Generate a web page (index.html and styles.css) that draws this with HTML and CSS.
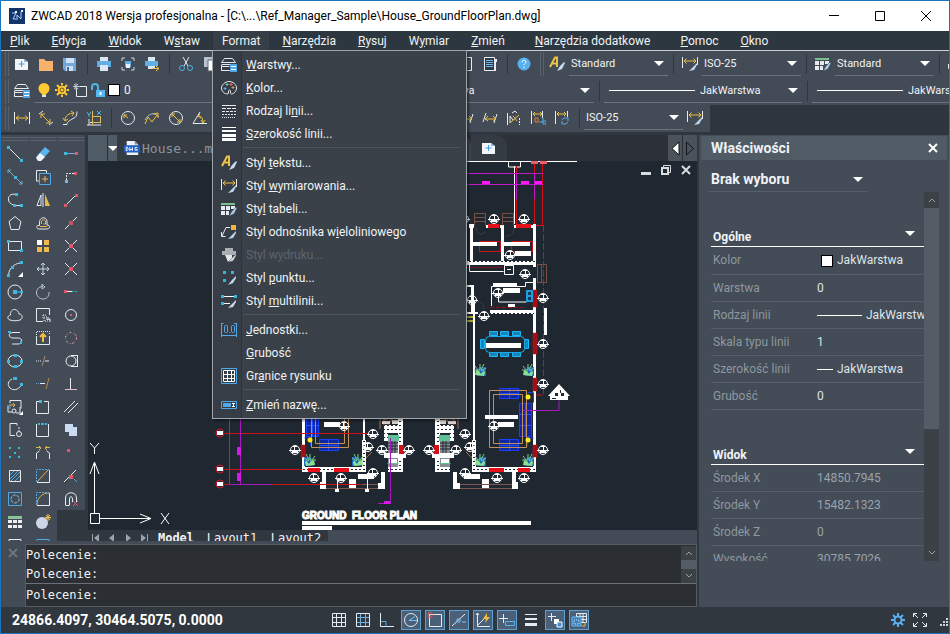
FILE: index.html
```html
<!DOCTYPE html>
<html lang="pl">
<head>
    <meta charset="UTF-8">
    <meta name="viewport" content="width=device-width, initial-scale=1.0">
    <title>ZWCAD 2018 Wersja profesjonalna</title>
    <link rel="stylesheet" href="styles.css">
</head>
<body>
    <!-- icons -->
    <svg class="sprite" aria-hidden="true">
        <symbol id="new" viewBox="0 0 16 16"><path d="M1 3h9l4 3v8H1z" fill="#f2f6fa" stroke="none"/><path d="M10 3v3h4z" fill="#8fb4dc" stroke="none"/><path d="M7.500 5v6M4.500 8h6" stroke="#3f9be0"/></symbol>
        <symbol id="open" viewBox="0 0 16 16"><path d="M1 3h5l2 2h7v10H1z" fill="#f6b26b" stroke="none"/></symbol>
        <symbol id="save" viewBox="0 0 16 16"><path d="M1 2h13v13H3l-2-2z" fill="#6fa8dc" stroke="none"/><path d="M4 2h8v5H4zM4 10h7v5H4z" fill="#cfe0f2" stroke="none"/><path d="M5 11h2v4H5z" fill="#3b6ea5" stroke="none"/></symbol>
        <symbol id="print" viewBox="0 0 16 16"><path d="M4 1h8v4H4zM4 9h8v6H4z" fill="#dbe7f3" stroke="none"/><path d="M1 5h14v6h-3V9H4v2H1z" fill="#62aee8" stroke="none"/></symbol>
        <symbol id="preview" viewBox="0 0 16 16"><path d="M2 5V2h3M11 2h3v3M2 11v3h3M11 14h3v-3" stroke="#cfd8e0"/><path d="M5 5h6v6H5z" fill="#62aee8" stroke="none"/><path d="M6 8h4v4H6z" fill="#e8f0f8" stroke="none"/></symbol>
        <symbol id="publish" viewBox="0 0 16 16"><path d="M4 1h7v4H4zM4 9h7v4H4z" fill="#dbe7f3" stroke="none"/><path d="M1 5h13v5H1z" fill="#62aee8" stroke="none"/><path d="M8 12.500h6M12 10l3 2.500-3 2.500" stroke="#f0c040"/></symbol>
        <symbol id="cut" viewBox="0 0 16 16"><path d="M5 1l5 9M11 1L6 10"/><circle cx="4" cy="12" r="2.500" stroke="#4fb3e8"/><circle cx="12" cy="12" r="2.500" stroke="#4fb3e8"/></symbol>
        <symbol id="copy" viewBox="0 0 16 16"><path d="M2 1h8v10H2z" fill="#b7c3cf" stroke="none"/><path d="M6 4h8v11H6z" fill="#fff" stroke="#5b6670"/></symbol>
        <symbol id="calc" viewBox="0 0 16 16"><path d="M2.500 1.500h11v13h-11z"/><path d="M5 5h6M5 8h6M5 11h6" stroke="#5fc0a0" stroke-dasharray="2 1"/></symbol>
        <symbol id="sheet" viewBox="0 0 16 16"><path d="M2.500 1.500h10v13h-10z" fill="#2f3a44" stroke="#e8eef4"/><path d="M4 4.500h7M4 6.500h7M4 8.500h7M4 10.500h7" stroke="#6fb8f0"/><path d="M12 3h3v3h-1v9h-2z" fill="#e8eef4" stroke="none"/></symbol>
        <symbol id="help" viewBox="0 0 16 16"><circle cx="8" cy="8" r="6.500" fill="#55b0f2" stroke="none"/><path d="M6 6.500c0-3 4-3 4-.5 0 1.500-2 1.500-2 3M8 10.500v1.500" stroke="#fff"/></symbol>
        <symbol id="textstyle" viewBox="0 0 16 16"><path d="M1 11L6 1.500h2V11M3 7.500h5" stroke="#e9c34a" stroke-width="2"/><path d="M15 6l-4 4-3 5 5-2 3-6z" fill="#c6daee" stroke="none"/></symbol>
        <symbol id="dimstyle" viewBox="0 0 16 16"><path d="M.5 1v11M15.500 1v8"/><path d="M2 5h12M4.500 2.500L2 5l2.500 2.500M11.500 2.500L14 5l-2.500 2.500" stroke="#f0c040"/><path d="M15 7l-4 4-4 4 5-1 3-5z" fill="#b9d4ee" stroke="none"/></symbol>
        <symbol id="tabstyle" viewBox="0 0 16 16"><path d="M0 2h14v2H0z" fill="#7cc08c" stroke="none"/><path d="M0 5h4v4H0zM5 5h4v4H5zM10 5h4v3h-4zM0 10h4v4H0zM5 10h3v4H5z" fill="#e6eaee" stroke="none"/><path d="M15 6l-4 4-3 5 5-2 3-6z" fill="#a9cbe6" stroke="#2f3a44" stroke-width=".5"/></symbol>
        <symbol id="layers" viewBox="0 0 16 16"><path d="M3.500 1.500h8l3 4h-14zM.5 7.500v2h8M.5 9.500v4h8M.5 13.500h8M1 7.500h8"/><path d="M9 7h7v8H9z" fill="#4fa8ec" stroke="none"/><path d="M10 9.500h5M10 12.500h5" stroke="#fff"/></symbol>
        <symbol id="bulb" viewBox="0 0 16 16"><circle cx="8" cy="6.500" r="5.500" fill="#ffc933" stroke="none"/><path d="M5 9h6l-1 4H6z" fill="#ffc933" stroke="none"/><path d="M6 14h4" stroke="#dbe4ec" stroke-width="2"/></symbol>
        <symbol id="sun" viewBox="0 0 16 16"><circle cx="8" cy="8" r="4" fill="#ffc933" stroke="#ffc933"/><path d="M8 1v2M8 13v2M1 8h2M13 8h2M3 3l2 2M11 11l2 2M13 3l-2 2M3 13l2-2" stroke="#ffc933" stroke-width="2"/><circle cx="8" cy="8" r="2" stroke="#6b5520"/></symbol>
        <symbol id="freeze" viewBox="0 0 16 16"><path d="M5 4.500h9.500v10h-10V6"/><path d="M4 1v7M1 4.500h7M2 2l4 5M6 2L2 7" stroke="#b9c4cf"/></symbol>
        <symbol id="lock" viewBox="0 0 16 16"><path d="M2 8V5a3 3 0 0 1 6 0v3" stroke="#4fb3e8" stroke-width="2"/><path d="M6 8h9v7H6z" fill="#55b8f0" stroke="none"/><path d="M10.500 10v3" stroke="#fff" stroke-width="2"/></symbol>
        <symbol id="dimlin" viewBox="0 0 16 16"><path d="M.5 2v12M15.500 2v12"/><path d="M2 8h12M5 5.500L2 8l3 2.500M11 5.500L14 8l-3 2.500" stroke="#f0c040"/></symbol>
        <symbol id="dimali" viewBox="0 0 16 16"><path d="M1 4l4-3M11 15l4-3"/><path d="M3 4l9 9M3 8V4h4M12 9v4H8" stroke="#f0c040"/></symbol>
        <symbol id="dimarc" viewBox="0 0 16 16"><path d="M1 14.500h4c0-3 3-4 6-6 3-1 4-3 4-7"/><path d="M3 10c0-4 4-7 9-7M1 8l2 3 3-2M9 1l3 2-2 3" stroke="#f0c040"/></symbol>
        <symbol id="dimord" viewBox="0 0 16 16"><path d="M3 9v6M1 15h14M4 12.500h11"/><path d="M6.500 6.500h8v6h-8zM6.500 1v14" stroke="#e0bd55"/><path d="M1 2l2 3 2-3M3 5v2M11 1l4 4M15 1l-4 4" stroke="#4fb3e8"/></symbol>
        <symbol id="dimrad" viewBox="0 0 16 16"><circle cx="8" cy="8" r="6.500"/><path d="M8 8L4 5M4 8V5h3" stroke="#f0c040"/></symbol>
        <symbol id="dimjog" viewBox="0 0 16 16"><path d="M1 10c3-6 9-9 14-3" stroke="#aeb6be"/><path d="M1 14l3-7 4 5 5-7M9 4l5-1v5" stroke="#f0c040"/></symbol>
        <symbol id="dimdia" viewBox="0 0 16 16"><circle cx="8" cy="8" r="6.500"/><path d="M4 4l8 8M4 7V4h3M12 9v3H9" stroke="#f0c040"/></symbol>
        <symbol id="dimang" viewBox="0 0 16 16"><path d="M8 2L1 13.500h14"/><path d="M6 6c4 0 5 3 5 7M9 10l2 3 2-3M8 4L6 6l3 2" stroke="#f0c040"/></symbol>
        <symbol id="dimobl" viewBox="0 0 16 16"><path d="M4 3L1 12M15 4l-3 9"/><path d="M3 9h11M6 6L3 9l3 2M11 6l3 3-3 2" stroke="#f0c040"/></symbol>
        <symbol id="dimtext" viewBox="0 0 16 16"><path d="M1.500 3v12M4 13V6l3 4M6 3l3-2 2 2"/><path d="M4 13L13 5M7 6l4 5" stroke="#f0c040"/><path d="M13.500 8v7" stroke-dasharray="2 1"/></symbol>
        <symbol id="dimover" viewBox="0 0 16 16"><path d="M1.500 1v13M12.500 1v7"/><path d="M3 4h9M3 4l2-2M3 4l2 2M12 4l-2-2M12 4l-2 2" stroke="#f0c040"/><path d="M5 8h3v4H5z" stroke="#e08030"/><path d="M9 12h4M13 8v6h3v-3h-3" stroke="#4fb3e8"/></symbol>
        <symbol id="dimupd" viewBox="0 0 16 16"><path d="M1.500 1v13M13.500 1v6"/><path d="M3 4h9M5 2L3 4l2 2M10 2l2 2-2 2" stroke="#f0c040"/><path d="M8 10l2-2h4M14 8v3M14 12l-2 2H8M8 14v-3" stroke="#5aa9e6"/></symbol>

        <symbol id="palette" viewBox="0 0 16 16"><path d="M7 14C3 14 .5 11 .5 8S4 1.500 8 1.500s7.500 3 7.500 6.500-3 6-5 6 0-4-2-4-.5 4-1.500 4z"/><path d="M6 3v3M4.500 4.500h3" stroke="#6fd08c"/><path d="M10 3v3M8.500 4.500h3" stroke="#e86a6a"/><path d="M4 7v3M2.500 8.500h3" stroke="#5ab0f0"/><path d="M12 6v3M10.500 7.500h3" stroke="#c9a050"/></symbol>
        <symbol id="ltype" viewBox="0 0 16 16"><path d="M1 2.500h14"/><path d="M1 5.500h14" stroke-dasharray="4 1"/><path d="M1 8.500h14" stroke-dasharray="3 1"/><path d="M1 11.500h14" stroke-dasharray="2 1"/><path d="M1 14.500h14" stroke-dasharray="1 1"/></symbol>
        <symbol id="lweight" viewBox="0 0 16 16"><path d="M1 1h14v1H1zM1 4h14v2H1zM1 8h14v3H1zM1 12h14v3H1z" fill="#fff" stroke="none"/></symbol>
        <symbol id="mleader" viewBox="0 0 16 16"><path d="M10 1h5v5h-5z" fill="#f0b83c" stroke="none"/><path d="M9 3.500H5L1 12M.5 8v4.500h4"/><path d="M15 7l-4 4-4 4 5-1 3-5z" fill="#b9d4ee" stroke="none"/></symbol>
        <symbol id="plotstyle" viewBox="0 0 16 16"><path d="M4 1h8v3H4zM1 4h14v4H1z" fill="#a9aeb3" stroke="none"/><path d="M4 8h7v5l-4 2z" fill="#e4e6e8" stroke="none"/><path d="M15 7l-4 4-4 4 5-1 3-5z" fill="#d8dce0" stroke="#50575f" stroke-width=".5"/></symbol>
        <symbol id="ptstyle" viewBox="0 0 16 16"><path d="M2 1h3v3H2zM10 1h3v3h-3zM2 9h3v3H2z" fill="#36b5d8" stroke="none"/><path d="M15 6l-4 4-4 5 5-2 3-5z" fill="#c6daee" stroke="none"/></symbol>
        <symbol id="mlstyle" viewBox="0 0 16 16"><path d="M2 3.500h12M2 10.500h7" stroke="#fff"/><path d="M0 2h3v3H0zM13 2h3v3h-3zM0 9h3v3H0z" fill="#36b5d8" stroke="none"/><path d="M15 7l-4 4-4 4 5-1 3-5z" fill="#c6daee" stroke="none"/></symbol>
        <symbol id="units" viewBox="0 0 16 16"><path d="M.5 1v14M15.500 1v14M.5 13.500h15M.5 1.500h2M13 1.500h2" stroke="#5aa9e6"/><rect x="3.500" y="3.500" width="3" height="7" rx="1" stroke="#5aa9e6"/><rect x="10.500" y="3.500" width="3" height="7" rx="1" stroke="#5aa9e6"/><path d="M8 10h1v1H8z" fill="#5aa9e6" stroke="none"/></symbol>
        <symbol id="limits" viewBox="0 0 16 16"><path d="M.5 .5h15v15H.5z" stroke="#4fa8e8"/><path d="M2.500 2.500h11v11h-11zM6.500 2v12M10.500 2v12M2 6.500h12M2 10.500h12" stroke="#fff"/></symbol>
        <symbol id="rename" viewBox="0 0 16 16"><path d="M.5 4.500h15v7H.5z" stroke="#4fa8e8"/><path d="M2 6h8v4H2z" fill="#4fa8e8" stroke="none"/><path d="M11 6.500h3M11 9.500h3M12.500 6v4" stroke="#fff"/></symbol>

        <symbol id="line" viewBox="0 0 16 16"><path d="M2 2l12 12"/><path d="M0 0h3v3H0zM13 13h3v3h-3z" fill="#3fb6dc" stroke="none"/></symbol>
        <symbol id="xline" viewBox="0 0 16 16"><path d="M1 1l14 14M1 4V1h3M15 12v3h-3" stroke="#6fb0c8"/><path d="M7 7h3v3H7z" fill="#3fb6dc" stroke="none"/></symbol>
        <symbol id="pline" viewBox="0 0 16 16"><path d="M9 2.500C3 1 1 5 1.500 8S5 14 13 13.500"/><path d="M8 1h3v3H8zM6 12h3v3H6zM13 12h3v3h-3z" fill="#3fb6dc" stroke="none"/></symbol>
        <symbol id="polygon" viewBox="0 0 16 16"><path d="M8 1.500l6 5-2 8H4l-2-8z"/></symbol>
        <symbol id="rect" viewBox="0 0 16 16"><path d="M1.500 3.500h13v9h-13z"/><path d="M0 2h3v3H0zM13 11h3v3h-3z" fill="#3fb6dc" stroke="none"/></symbol>
        <symbol id="arc" viewBox="0 0 16 16"><path d="M1.500 14C2 8 6 3 13 2"/><path d="M0 13h3v3H0zM4 5h3v3H4zM13 0h3v3h-3z" fill="#3fb6dc" stroke="none"/><path d="M16 11v5h-5z" fill="#fff" stroke="none"/></symbol>
        <symbol id="circle" viewBox="0 0 16 16"><circle cx="8" cy="8" r="7"/><path d="M8 8h7" stroke="#3fb6dc"/><path d="M6 6h4v4H6zM13 7h3v2h-3z" fill="#3fb6dc" stroke="none"/></symbol>
        <symbol id="cloud" viewBox="0 0 16 16"><path d="M3 13c-3-1-3-4 .5-5C3 4 6 2 8 2.500S12 5 12 7c4 0 4 5 1 6-3 1-7 1-10 0z"/></symbol>
        <symbol id="spline" viewBox="0 0 16 16"><path d="M13 2.500H6C1 2.500 1 8 6 8h5c5 0 5 6 0 6H5"/><path d="M1 1h3v2H1zM13 11h2v3h-2z" fill="#3fb6dc" stroke="none"/></symbol>
        <symbol id="ellipse" viewBox="0 0 16 16"><ellipse cx="8" cy="8" rx="7" ry="6"/><path d="M0 7h3v3H0zM7 1h3v3H7zM13 7h3v3h-3zM7 12h3v3H7z" fill="#3fb6dc" stroke="none"/></symbol>
        <symbol id="elarc" viewBox="0 0 16 16"><path d="M5 3C1 5 0 9 3 12s9 2 11-3"/><path d="M6 1h4v3H6zM13 7h3v3h-3z" fill="#3fb6dc" stroke="none"/></symbol>
        <symbol id="insert" viewBox="0 0 16 16"><path d="M3 4V1.500h11v8M1 7v6h4M13 8v6h-4"/><circle cx="7" cy="12" r="2"/><path d="M2 6h6M6 4l2 2-2 2" stroke="#e0b84a"/><path d="M16 12v4h-4z" fill="#fff" stroke="none"/><path d="M0 7h3v3" stroke="#4fa8e8"/></symbol>
        <symbol id="block" viewBox="0 0 16 16"><path d="M10 3.500V1.500H3v12h5"/><path d="M12 5v4" stroke-dasharray="2 1"/><circle cx="12" cy="12" r="2.500"/></symbol>
        <symbol id="points" viewBox="0 0 16 16"><path d="M2 2h2v2H2zM11 2h2v2h-2zM7 7h2v2H7zM2 11h2v2H2zM11 11h2v2h-2z" fill="#3fb6dc" stroke="none"/></symbol>
        <symbol id="hatch" viewBox="0 0 16 16"><path d="M2.500 2.500h11v11h-11z"/><path d="M3 7l4-4M3 11l8-8M4 13l9-9M8 13l5-5" stroke="#4fa8e8"/></symbol>
        <symbol id="region" viewBox="0 0 16 16"><path d="M1.500 1.500h13v13h-13z" stroke="#4fa8e8"/><circle cx="8" cy="8" r="4" stroke-dasharray="3 1" stroke="#8fc4e8"/></symbol>
        <symbol id="table" viewBox="0 0 16 16"><path d="M1 2h14v3H1z" fill="#8cc49a" stroke="none"/><path d="M1 6h4v3H1zM6 6h4v3H6zM11 6h4v3h-4zM1 11h4v3H1zM6 11h4v3H6zM11 11h4v3h-4z" fill="#eef1f4" stroke="none"/></symbol>
        <symbol id="mtext" viewBox="0 0 16 16"><path d="M2 2.500h12v12H2zM5 6h6"/></symbol>
        <symbol id="erase" viewBox="0 0 16 16"><path d="M10 1l5 4-9 10-5-4z" fill="#5ab4f0" stroke="none"/><path d="M5 7l5 4-4 4H3l-2-3z" fill="#f0f4f8" stroke="none"/></symbol>
        <symbol id="copyobj" viewBox="0 0 16 16"><path d="M4 12H1.500V1.500h10V4"/><path d="M4.500 4.500h11v11h-11z" stroke="#4fa8e8"/><path d="M10 7v6M7 10h6" stroke="#f0b060"/></symbol>
        <symbol id="mirror" viewBox="0 0 16 16"><path d="M6 3v10.500H2z"/><path d="M8 1v14"/><path d="M10 2v12h5z" fill="#e8b84a" stroke="none"/></symbol>
        <symbol id="offset" viewBox="0 0 16 16"><path d="M2.500 10.500h2V8C4 1 13 1 12 8v2c4 0 3 4 0 4H4c-2 0-3-2-1.500-3.500z"/><path d="M5 11.500h7M6.500 9V7c0-3 4-3 4 0v2h-2" stroke="#e8b84a"/></symbol>
        <symbol id="array" viewBox="0 0 16 16"><path d="M2 2h5v5H2z" fill="#fff" stroke="none"/><path d="M9 2h5v5H9zM2 9h5v5H2zM9 9h5v5H9z" fill="#f0b84a" stroke="none"/></symbol>
        <symbol id="move" viewBox="0 0 16 16"><path d="M8 2v12M2 8h12M6 4l2-2 2 2M6 12l2 2 2-2M4 6L2 8l2 2M12 6l2 2-2 2" stroke="#c4d4e6"/></symbol>
        <symbol id="rotate" viewBox="0 0 16 16"><path d="M8 2.500C3 2.500 1.500 6 1.500 9S5 15 8 15s6.500-2 6-7M7 0v5l3-2z" stroke="#b9c6d3"/></symbol>
        <symbol id="scale" viewBox="0 0 16 16"><path d="M14.500 8V1.500h-13v13H8"/><path d="M8 8h3M8 8v3M9 14v-4h4v4z" stroke-dasharray="1 1"/><path d="M11 12h4v3" stroke="#f0f4f8"/></symbol>
        <symbol id="stretch" viewBox="0 0 16 16"><path d="M1.500 6v8.500h13V6"/><path d="M1.500 5V1.500h13V5" stroke-dasharray="1 1"/><path d="M8 12V5M5 7l3-3 3 3" stroke="#f0c040" stroke-width="2"/></symbol>
        <symbol id="trim" viewBox="0 0 16 16"><path d="M1 8h5" stroke-dasharray="1 1"/><path d="M10 8h4"/><path d="M10 3L7 13" stroke="#a89068"/></symbol>
        <symbol id="extend" viewBox="0 0 16 16"><path d="M1 7.500h4" stroke-dasharray="1 1" stroke="#4fa8e8"/><path d="M5 7.500h5"/><path d="M14 2l-3 11" stroke="#b08a50"/></symbol>
        <symbol id="breakpt" viewBox="0 0 16 16"><path d="M4 2.500H1.500v12h12v-12H9"/><path d="M4 1h3v3H4z" fill="#3fb6dc" stroke="none"/></symbol>
        <symbol id="break" viewBox="0 0 16 16"><path d="M1.500 2v12.500h12V2"/><path d="M3 1h2v2H3zM6 1h3v2H6zM10 1h2v2h-2z" fill="#3fb6dc" stroke="none"/></symbol>
        <symbol id="join" viewBox="0 0 16 16"><path d="M1.500 14V8l3-2M14.500 14V8l-3-2"/><path d="M1 2.500h5M15 2.500h-5M4 1l2 2-2 2M12 1l-2 2 2 2" stroke="#e0b84a"/></symbol>
        <symbol id="chamfer" viewBox="0 0 16 16"><path d="M2 14.500h12.500V2"/><path d="M1.500 14V1.500H14" stroke="#4fa8e8" stroke-dasharray="2 1"/><path d="M2 14L13 2" stroke="#e0b84a"/></symbol>
        <symbol id="fillet" viewBox="0 0 16 16"><path d="M2 14.500h12.500V2"/><path d="M1.500 14V1.500H14" stroke="#4fa8e8" stroke-dasharray="2 1"/><path d="M2 14C2 7 7 2 14 2" stroke="#c9b060"/></symbol>
        <symbol id="explode" viewBox="0 0 16 16"><circle cx="7" cy="9" r="6" fill="#ccd8ea" stroke="none"/><path d="M13 0v7M10 3.500h6M11 1l4 5M15 1l-4 5" stroke="#f0c050"/></symbol>
        <symbol id="copytab" viewBox="0 0 16 16"><path d="M2 2.500h12v12H2zM5 5h5v5H5z" stroke="#4fa8e8"/></symbol>
        <symbol id="snapend" viewBox="0 0 16 16"><path d="M2 7.500h12" stroke="#7fa8e0"/><path d="M1 6h3v3H1z" fill="#3fb6dc" stroke="none"/><path d="M12 6h3v3h-3z" fill="#e0566a" stroke="none"/></symbol>
        <symbol id="snapfrom" viewBox="0 0 16 16"><path d="M3.500 11V4.500h8" stroke-dasharray="2 1"/><path d="M11 3h3v3h-3z" fill="#e0566a" stroke="none"/><path d="M2 11h3v3H2z" fill="#7ab4e8" stroke="none"/></symbol>
        <symbol id="snapseg" viewBox="0 0 16 16"><path d="M3 13L13 3"/><path d="M1 12h3v3H1zM12 2h3v3h-3z" fill="#e0566a" stroke="none"/></symbol>
        <symbol id="snapmid" viewBox="0 0 16 16"><path d="M2 14L14 2"/><path d="M6 6h4v4H6z" fill="#c8505f" stroke="none"/></symbol>
        <symbol id="snapint" viewBox="0 0 16 16"><path d="M2 2l12 12M14 2L2 14"/><path d="M6 6h4v4H6z" fill="#e0566a" stroke="none"/></symbol>
        <symbol id="snapext" viewBox="0 0 16 16"><path d="M3 7.500h6"/><path d="M9 7.500h6" stroke="#2fb5a8" stroke-dasharray="2 1"/><path d="M1 6h3v3H1z" fill="#e0566a" stroke="none"/></symbol>
        <symbol id="snapcen" viewBox="0 0 16 16"><circle cx="8" cy="8" r="5.500"/><path d="M7 7h2v2H7z" fill="#e0566a" stroke="none"/></symbol>
        <symbol id="snapquad" viewBox="0 0 16 16"><circle cx="8" cy="8" r="5.500" stroke="#c85a6a" stroke-dasharray="2 2"/><circle cx="8" cy="8" r="5.500" stroke-dasharray="1 5"/></symbol>
        <symbol id="snaptan" viewBox="0 0 16 16"><circle cx="8" cy="8" r="5"/><path d="M14.500 2v12M8 2.500h6M8 13.500h6"/></symbol>
        <symbol id="snapperp" viewBox="0 0 16 16"><path d="M7.500 2v11"/><path d="M2 13.500h12" stroke="#e8c0c8"/></symbol>
        <symbol id="snappar" viewBox="0 0 16 16"><path d="M1 13L12 2M5 14L15 4"/></symbol>
        <symbol id="snapins" viewBox="0 0 16 16"><path d="M2 2h8v3h4v9H6v-4H2z" fill="#c9dcf2" stroke="none"/></symbol>
        <symbol id="snapnode" viewBox="0 0 16 16"><path d="M4 4h3v3H4z" fill="#e0566a" stroke="none"/></symbol>
        <symbol id="snapnear" viewBox="0 0 16 16"><path d="M1 14L13 2"/><path d="M6 7h4v4H6z" fill="#e0566a" stroke="none"/><path d="M11 11l3 3" stroke="#4fa8e8"/></symbol>
        <symbol id="magnet" viewBox="0 0 16 16"><path d="M2.500 14V7c0-7 11-7 11 0v4M6.500 14V8c0-3 3-3 3 0v3M2.500 14.500h4"/><path d="M10 10l5 5M15 10l-5 5" stroke="#e0566a"/></symbol>

        <symbol id="grid" viewBox="0 0 16 16"><path d="M1.500 1.500h13v13h-13zM5.500 1v14M10.500 1v14M1 5.500h14M1 10.500h14"/></symbol>
        <symbol id="snap" viewBox="0 0 16 16"><path d="M1.500 1.500h13v13h-13z"/><path d="M5.500 2v12M10.500 2v12M2 5.500h12M2 10.500h12" stroke="#6fb0e0"/></symbol>
        <symbol id="ortho" viewBox="0 0 16 16"><path d="M1.500 1v13.500H15"/><path d="M2 9.500h5v5" stroke="#5aa9e6"/></symbol>
        <symbol id="polar" viewBox="0 0 16 16"><circle cx="8" cy="8" r="6.500"/><path d="M14 8.500H6l6-4" stroke="#6fc0f0"/></symbol>
        <symbol id="osnap" viewBox="0 0 16 16"><path d="M2.500 2.500h12v12h-12z"/><path d="M1 1h4v4H1z" stroke="#e05555"/></symbol>
        <symbol id="otrack" viewBox="0 0 16 16"><path d="M1 14L14 2"/><path d="M6 7h3v3H6zM11 10h4" stroke="#6fc0f0"/></symbol>
        <symbol id="ducs" viewBox="0 0 16 16"><path d="M2.500 1v13.500H15M2 14L9 7M1 3l1.500-2L4 3"/><path d="M12 1L8 7h3l-1 4 5-6h-3z" fill="#f0c040" stroke="none"/></symbol>
        <symbol id="dyn" viewBox="0 0 16 16"><path d="M4.500 2v9M0 6.500h9"/><path d="M6.500 9.500h9v4h-9z" stroke="#5ab4f0"/></symbol>
        <symbol id="lwt" viewBox="0 0 16 16"><path d="M2 2.500h12"/><path d="M2 7h12" stroke-width="2"/><path d="M2 12.500h12" stroke-width="3"/></symbol>
        <symbol id="cycle" viewBox="0 0 16 16"><path d="M4.500 1v8M1 4.500h8"/><path d="M7 7h5v5H7z" fill="#fff" stroke="none"/><path d="M10 10h5v5h-5z" fill="#3f8fd0" stroke="#fff"/></symbol>
        <symbol id="model" viewBox="0 0 16 16"><path d="M5.500 1.500h10v9h-10zM9 1v9M12 1v9M5 4.500h11M5 7.500h11"/><path d="M1 5h9v9H1z" fill="#3f7fb8" stroke="#6fb8f0"/><path d="M3 8h5v4H3z" stroke="#cfe4f6" stroke-dasharray="1 1"/><path d="M14 10v4h-3" stroke="#f0b040"/></symbol>
        <symbol id="gear" viewBox="0 0 16 16"><path d="M8 1v14M1 8h14M3 3l10 10M13 3L3 13" stroke="#5ab0f0" stroke-width="2"/><circle cx="8" cy="8" r="4.500" fill="#5ab0f0" stroke="none"/><circle cx="8" cy="8" r="2.500" fill="#31373f" stroke="none"/></symbol>
        <symbol id="full" viewBox="0 0 16 16"><path d="M1.500 5V1.500H5M11 1.500h3.500V5M1.500 11v3.500H5M11 14.500h3.500V11M2 2l4 4M14 2l-4 4M2 14l4-4M14 14l-4-4"/></symbol>
        <symbol id="grip" viewBox="0 0 8 8"><path d="M6 0h2v2H6zM3 3h2v2H3zM6 3h2v2H6zM0 6h2v2H0zM3 6h2v2H3zM6 6h2v2H6z" fill="#cfd3d7" stroke="none"/></symbol>
    </svg>

    <div class="window">
        <header class="titlebar">
            <svg class="logo" viewBox="0 0 16 16"><path d="M0 0h16v16H0z" fill="#14336b"/><path d="M3 5h4l-3 6h3M8 12V7l4 4V4" fill="none" stroke="#a9d4f6"/><path d="M6 3h2v2H6zM12 2h2v2h-2z" fill="#e4f2fc"/></svg>
            <h1>ZWCAD 2018 Wersja profesjonalna - [C:\...\Ref_Manager_Sample\House_GroundFloorPlan.dwg]</h1>
            <div class="win-btns">
                <button aria-label="Minimalizuj"><svg viewBox="0 0 12 12"><path d="M1 5.500h10"/></svg></button>
                <button aria-label="Maksymalizuj"><svg viewBox="0 0 12 12"><path d="M1.500 1.500h9v9h-9z"/></svg></button>
                <button aria-label="Zamknij"><svg viewBox="0 0 12 12"><path d="M1 1l10 10M11 1L1 11"/></svg></button>
            </div>
        </header>

        <nav class="menubar">
            <button><u>P</u>lik</button>
            <button><u>E</u>dycja</button>
            <button><u>W</u>idok</button>
            <button>W<u>s</u>taw</button>
            <div class="menu-wrap">
                <button class="on">Format</button>
                <div class="dropdown">
                    <button><svg class="ico"><use href="#layers"/></svg><span><u>W</u>arstwy...</span></button>
                    <button><svg class="ico"><use href="#palette"/></svg><span><u>K</u>olor...</span></button>
                    <button><svg class="ico"><use href="#ltype"/></svg><span>Rodzaj li<u>n</u>ii...</span></button>
                    <button><svg class="ico"><use href="#lweight"/></svg><span><u>S</u>zerokość linii...</span></button>
                    <hr>
                    <button><svg class="ico"><use href="#textstyle"/></svg><span>Styl <u>t</u>ekstu...</span></button>
                    <button><svg class="ico"><use href="#dimstyle"/></svg><span>Styl <u>w</u>ymiarowania...</span></button>
                    <button><svg class="ico"><use href="#tabstyle"/></svg><span>Sty<u>l</u> tabeli...</span></button>
                    <button><svg class="ico"><use href="#mleader"/></svg><span>Styl odnośnika w<u>i</u>eloliniowego</span></button>
                    <button disabled><svg class="ico"><use href="#plotstyle"/></svg><span>Styl w<u>y</u>druku...</span></button>
                    <button><svg class="ico"><use href="#ptstyle"/></svg><span>Styl <u>p</u>unktu...</span></button>
                    <button><svg class="ico"><use href="#mlstyle"/></svg><span>Styl <u>m</u>ultilinii...</span></button>
                    <hr>
                    <button><svg class="ico"><use href="#units"/></svg><span><u>J</u>ednostki...</span></button>
                    <button><svg class="ico"></svg><span><u>G</u>rubość</span></button>
                    <button><svg class="ico"><use href="#limits"/></svg><span>Gr<u>a</u>nice rysunku</span></button>
                    <hr>
                    <button><svg class="ico"><use href="#rename"/></svg><span><u>Z</u>mień nazwę...</span></button>
                </div>
            </div>
            <button><u>N</u>arzędzia</button>
            <button><u>R</u>ysuj</button>
            <button>W<u>y</u>miar</button>
            <button><u>Z</u>mień</button>
            <button class="wide"><u>N</u>arzędzia dodatkowe</button>
            <button><u>P</u>omoc</button>
            <button><u>O</u>kno</button>
        </nav>

        <div class="toolbars">
            <div class="toolbar">
                <div class="tb-left">
                    <i class="handle"></i>
                    <button aria-label="Nowy"><svg class="ico"><use href="#new"/></svg></button>
                    <button aria-label="Otwórz"><svg class="ico"><use href="#open"/></svg></button>
                    <button aria-label="Zapisz"><svg class="ico"><use href="#save"/></svg></button>
                    <i class="sep"></i>
                    <button aria-label="Drukuj"><svg class="ico"><use href="#print"/></svg></button>
                    <button aria-label="Podgląd wydruku"><svg class="ico"><use href="#preview"/></svg></button>
                    <button aria-label="Publikuj"><svg class="ico"><use href="#publish"/></svg></button>
                    <i class="sep"></i>
                    <button aria-label="Wytnij"><svg class="ico"><use href="#cut"/></svg></button>
                    <button aria-label="Kopiuj"><svg class="ico"><use href="#copy"/></svg></button>
                </div>
                <button aria-label="Kalkulator"><svg class="ico"><use href="#calc"/></svg></button>
                <button aria-label="Arkusze"><svg class="ico"><use href="#sheet"/></svg></button>
                <i class="sep"></i>
                <button aria-label="Pomoc"><svg class="ico"><use href="#help"/></svg></button>
                <i class="handle"></i>
                <button aria-label="Styl tekstu"><svg class="ico"><use href="#textstyle"/></svg></button>
                <label class="combo"><select aria-label="Styl tekstu"><option>Standard</option></select></label>
                <i class="sep"></i>
                <button aria-label="Styl wymiarowania"><svg class="ico"><use href="#dimstyle"/></svg></button>
                <label class="combo"><select aria-label="Styl wymiarowania"><option>ISO-25</option></select></label>
                <i class="sep"></i>
                <button aria-label="Styl tabeli"><svg class="ico"><use href="#tabstyle"/></svg></button>
                <label class="combo"><select aria-label="Styl tabeli"><option>Standard</option></select></label>
                <i class="sep"></i>
                <button aria-label="Styl odnośnika"><svg class="ico"><use href="#mleader"/></svg></button>
            </div>
            <div class="toolbar">
                <div class="tb-layers">
                    <i class="handle"></i>
                    <button aria-label="Warstwy"><svg class="ico"><use href="#layers"/></svg></button>
                    <label class="combo layer">
                        <svg class="ico"><use href="#bulb"/></svg>
                        <svg class="ico"><use href="#sun"/></svg>
                        <svg class="ico"><use href="#freeze"/></svg>
                        <svg class="ico"><use href="#lock"/></svg>
                        <i class="swatch"></i>
                        <select aria-label="Warstwa"><option>0</option></select>
                    </label>
                </div>
                <label class="combo color"><i class="swatch"></i><select aria-label="Kolor"><option>JakWarstwa</option></select></label>
                <i class="sep"></i>
                <label class="combo ltype"><i class="stroke"></i><select aria-label="Rodzaj linii"><option>JakWarstwa</option></select></label>
                <i class="sep"></i>
                <label class="combo ltype"><i class="stroke"></i><select aria-label="Szerokość linii"><option>JakWarstwa</option></select></label>
            </div>
            <div class="toolbar short">
                <div class="tb-left">
                    <i class="handle"></i>
                    <button aria-label="Wymiar liniowy"><svg class="ico"><use href="#dimlin"/></svg></button>
                    <button aria-label="Wymiar wyrównany"><svg class="ico"><use href="#dimali"/></svg></button>
                    <button aria-label="Długość łuku"><svg class="ico"><use href="#dimarc"/></svg></button>
                    <button aria-label="Współrzędne"><svg class="ico"><use href="#dimord"/></svg></button>
                    <i class="sep"></i>
                    <button aria-label="Promień"><svg class="ico"><use href="#dimrad"/></svg></button>
                    <button aria-label="Uskok"><svg class="ico"><use href="#dimjog"/></svg></button>
                    <button aria-label="Średnica"><svg class="ico"><use href="#dimdia"/></svg></button>
                    <button aria-label="Kątowy"><svg class="ico"><use href="#dimang"/></svg></button>
                </div>
                <button aria-label="Odstęp"><svg class="ico"><use href="#dimobl"/></svg></button>
                <button aria-label="Pochyl"><svg class="ico"><use href="#dimobl"/></svg></button>
                <button aria-label="Edycja tekstu"><svg class="ico"><use href="#dimtext"/></svg></button>
                <button aria-label="Zastąp"><svg class="ico"><use href="#dimover"/></svg></button>
                <button aria-label="Aktualizuj"><svg class="ico"><use href="#dimupd"/></svg></button>
                <i class="sep"></i>
                <label class="combo"><select aria-label="Styl wymiaru"><option>ISO-25</option></select></label>
                <button aria-label="Styl wymiarowania"><svg class="ico"><use href="#dimstyle"/></svg></button>
            </div>
        </div>

        <div class="work">
            <div class="left">
                <div class="main">
                    <aside class="tools">
                        <div class="tools-col">
                            <i class="handle-h"></i>
                            <button aria-label="Linia"><svg class="ico"><use href="#line"/></svg></button>
                            <button aria-label="Prosta"><svg class="ico"><use href="#xline"/></svg></button>
                            <button aria-label="Polilinia"><svg class="ico"><use href="#pline"/></svg></button>
                            <button aria-label="Wielobok"><svg class="ico"><use href="#polygon"/></svg></button>
                            <button aria-label="Prostokąt"><svg class="ico"><use href="#rect"/></svg></button>
                            <button aria-label="Łuk"><svg class="ico"><use href="#arc"/></svg></button>
                            <button aria-label="Okrąg"><svg class="ico"><use href="#circle"/></svg></button>
                            <button aria-label="Chmurka"><svg class="ico"><use href="#cloud"/></svg></button>
                            <button aria-label="Splajn"><svg class="ico"><use href="#spline"/></svg></button>
                            <button aria-label="Elipsa"><svg class="ico"><use href="#ellipse"/></svg></button>
                            <button aria-label="Łuk eliptyczny"><svg class="ico"><use href="#elarc"/></svg></button>
                            <button aria-label="Wstaw blok"><svg class="ico"><use href="#insert"/></svg></button>
                            <button aria-label="Utwórz blok"><svg class="ico"><use href="#block"/></svg></button>
                            <button aria-label="Punkt"><svg class="ico"><use href="#points"/></svg></button>
                            <button aria-label="Kreskowanie"><svg class="ico"><use href="#hatch"/></svg></button>
                            <button aria-label="Region"><svg class="ico"><use href="#region"/></svg></button>
                            <button aria-label="Tabela"><svg class="ico"><use href="#table"/></svg></button>
                            <button aria-label="Tekst"><svg class="ico"><use href="#mtext"/></svg></button>
                        </div>
                        <div class="tools-col">
                            <i class="handle-h"></i>
                            <button aria-label="Wymaż"><svg class="ico"><use href="#erase"/></svg></button>
                            <button aria-label="Kopiuj"><svg class="ico"><use href="#copyobj"/></svg></button>
                            <button aria-label="Lustro"><svg class="ico"><use href="#mirror"/></svg></button>
                            <button aria-label="Odsuń"><svg class="ico"><use href="#offset"/></svg></button>
                            <button aria-label="Szyk"><svg class="ico"><use href="#array"/></svg></button>
                            <button aria-label="Przesuń"><svg class="ico"><use href="#move"/></svg></button>
                            <button aria-label="Obróć"><svg class="ico"><use href="#rotate"/></svg></button>
                            <button aria-label="Skala"><svg class="ico"><use href="#scale"/></svg></button>
                            <button aria-label="Rozciągnij"><svg class="ico"><use href="#stretch"/></svg></button>
                            <button aria-label="Utnij"><svg class="ico"><use href="#trim"/></svg></button>
                            <button aria-label="Wydłuż"><svg class="ico"><use href="#extend"/></svg></button>
                            <button aria-label="Przerwij w punkcie"><svg class="ico"><use href="#breakpt"/></svg></button>
                            <button aria-label="Przerwij"><svg class="ico"><use href="#break"/></svg></button>
                            <button aria-label="Połącz"><svg class="ico"><use href="#join"/></svg></button>
                            <button aria-label="Fazuj"><svg class="ico"><use href="#chamfer"/></svg></button>
                            <button aria-label="Zaokrąglij"><svg class="ico"><use href="#fillet"/></svg></button>
                            <button aria-label="Rozbij"><svg class="ico"><use href="#explode"/></svg></button>
                            <button aria-label="Kolejność"><svg class="ico"><use href="#copytab"/></svg></button>
                        </div>
                        <div class="tools-col last">
                            <i class="handle-h"></i>
                            <button aria-label="Punkt śledzenia"><svg class="ico"><use href="#snapend"/></svg></button>
                            <button aria-label="Od"><svg class="ico"><use href="#snapfrom"/></svg></button>
                            <button aria-label="Koniec"><svg class="ico"><use href="#snapseg"/></svg></button>
                            <button aria-label="Symetria"><svg class="ico"><use href="#snapmid"/></svg></button>
                            <button aria-label="Przecięcie"><svg class="ico"><use href="#snapint"/></svg></button>
                            <button aria-label="Przecięcie pozorne"><svg class="ico"><use href="#snapint"/></svg></button>
                            <button aria-label="Przedłużenie"><svg class="ico"><use href="#snapext"/></svg></button>
                            <button aria-label="Centrum"><svg class="ico"><use href="#snapcen"/></svg></button>
                            <button aria-label="Kwadrant"><svg class="ico"><use href="#snapquad"/></svg></button>
                            <button aria-label="Styczny"><svg class="ico"><use href="#snaptan"/></svg></button>
                            <button aria-label="Prostopadły"><svg class="ico"><use href="#snapperp"/></svg></button>
                            <button aria-label="Równoległy"><svg class="ico"><use href="#snappar"/></svg></button>
                            <button aria-label="Wstawienie"><svg class="ico"><use href="#snapins"/></svg></button>
                            <button aria-label="Węzeł"><svg class="ico"><use href="#snapnode"/></svg></button>
                            <button aria-label="Najbliższy"><svg class="ico"><use href="#snapnear"/></svg></button>
                            <button aria-label="Bez lokalizacji"><svg class="ico"><use href="#magnet"/></svg></button>
                        </div>
                    </aside>

                    <section class="docs">
                        <div class="doc-tabs">
                            <i class="tab-block"></i>
                            <button class="tab-list" aria-label="Lista rysunków"><i class="tri"></i></button>
                            <button class="doc-tab">
                                <svg class="dwg" viewBox="0 0 18 16"><path d="M3 0h9l4 4v12H3z" fill="#eef2f6"/><path d="M12 0l4 4h-4z" fill="#8a949e"/><rect y="5" width="18" height="8" rx="1" fill="#1d5fc4"/><path d="M2.500 7v4h1l1-1V8l-1-1zM6.500 7v4l1.500-2 1.500 2V7M15 7.500h-2.500v3H15V9.500h-1" fill="none" stroke="#fff"/></svg>
                                <span>House...mple.dwg</span>
                            </button>
                            <span class="tab-close">x</span>
                            <button class="tab-new" aria-label="Nowy rysunek"><svg class="ico"><use href="#new"/></svg></button>
                            <div class="tab-nav">
                                <button aria-label="Poprzedni"><svg viewBox="0 0 14 26"><path d="M11 7v13L4 13.500z" fill="#fff" stroke="#111"/></svg></button>
                                <button aria-label="Następny"><svg viewBox="0 0 14 26"><path d="M3.500 7v13l7-6.500z" fill="none" stroke="#14181c"/></svg></button>
                            </div>
                        </div>

                        <div class="canvas">
                            <svg class="drawing" width="609" height="370" viewBox="88 161 609 370">
                                <defs>
                                    <!-- section mark -->
                                    <g id="mark"><circle r="4.500" fill="none" stroke="#fff"/><path d="M-6 .5h12" stroke="#fff"/><path d="M-3 1h6v2h-6z" fill="#fff"/><path d="M-2-3.500h4M.5-4v4" stroke="#fff"/></g>
                                    <g id="plant"><path d="M-1-4h7v9h-9z" fill="#1766c8"/><path d="M-5 4l1-5 3 1 2 3 3-4 1 3-1 3z" fill="#8be08b"/><path d="M-5-5l3 4M0-7v6M4-7l-3 6M6-3l-5 3M-6-1h6" stroke="#7ccf86"/></g>
                                    <pattern id="dots" width="4" height="4" patternUnits="userSpaceOnUse"><path d="M0 0h4v4H0z" fill="#fff"/><path d="M1 1h2v1H1z" fill="#1f2830"/></pattern>
                                    <g id="wing">
                                        <!-- walls -->
                                        <path d="M470 226h3v36h-3zM501 226h3v36h-3zM533 224h3v43h-3zM533 278h3v192h-3zM473 300h2v170h-2zM469 224h5v4h-5zM486 225h3v3h-3zM500 225h4v3h-4zM514 225h3v3h-3zM530 225h6v3h-6zM464 285h10v2h-10zM471 285h3v27h-3zM464 312h14v2h-14z" fill="#fff"/>
                                        <path d="M464 261h72v4h-72zM490 310h44v4h-44zM472 467h64v5h-64zM472 440h4v30h-4z" fill="url(#dots)"/>
                                        <path d="M488 224h11v4h-11zM516 224h15v4h-15zM489 468h15v4h-15zM518 468h12v4h-12z" fill="#e81018"/>
                                        <path d="M533 290h4v17h-4zM533 333h4v21h-4zM533 378h4v13h-4zM533 445h4v12h-4z" fill="#9c1018" stroke="#d01018" stroke-width=".5"/>
                                        <!-- bathrooms -->
                                        <path d="M479.500 241.500h21v10h-21zM511.500 241.500h21v10h-21z" fill="none" stroke="#d01018"/>
                                        <path d="M470 267.500h33" stroke="#7c1820"/>
                                        <path d="M471 242h26v4h-26zM504 242h26v4h-26zM515 251h16v5h-16z" fill="#fff"/>
                                        <path d="M469.500 265v6.500h34M504.500 265.500h9v9h-9zM507 269.500h4" fill="none" stroke="#fff"/>
                                        <path d="M474.500 213.500h11v12M474.500 213.500v12M474.500 217.500h11M474.500 221.500h11M502.500 213.500h11v12M502.500 213.500v12M502.500 217.500h11M502.500 221.500h11M537.500 264.500h9v18h-9zM541.500 264v18" fill="none" stroke="#7c5040"/>
                                        <path d="M476 228c1 6 5 8 9 4M505 236c5 1 9-2 9-8M476 301c5 0 8 3 8 8" fill="none" stroke="#4a3a38"/>
                                        <!-- kitchen -->
                                        <path d="M491.500 306v-19.500h34v-4h8M498.500 288v14h28" fill="none" stroke="#fff"/>
                                        <path d="M493 283h24v4h-24zM503 288h17v5h-17zM508 304h7v3h-7zM544 308h3v27h-3z" fill="#fff"/>
                                        <path d="M490 307.500h36" stroke="#a01018" stroke-dasharray="4 2"/>
                                        <path d="M526 290h7v12h-7z" fill="#1e9ee0"/><path d="M528 292h3v3h-3zM528 297h3v3h-3z" fill="#123a5c"/>
                                        <path d="M464 317h9M464 321h9" stroke="#a8a428" stroke-width="2"/>
                                        <!-- dining table -->
                                        <path d="M489.500 331.500h8v4h-8zM500.500 331.500h8v4h-8zM512.500 331.500h8v4h-8zM489.500 352.500h8v4h-8zM500.500 352.500h8v4h-8zM512.500 352.500h8v4h-8zM480.500 339.500h4v9h-4zM524.500 339.500h4v9h-4z" fill="#1684b8" stroke="#18b8fa"/>
                                        <rect x="485.500" y="336.500" width="39" height="16" rx="4" fill="#1f2830" stroke="#18a8ea"/>
                                        <path d="M486 343h35v5h-35z" fill="#fff"/>
                                        <!-- living room -->
                                        <path d="M499.500 388.500h19v10h-19zM519.500 403.500h12v33h-12zM499.500 439.500h19v11h-19z" fill="#1226a0" stroke="#1840ff"/>
                                        <path d="M509.500 388v11M499 393.500h19M525.500 404v32M519 414.500h13M519 425.500h13M509.500 439v12M499 445.500h19" stroke="#2050ff"/>
                                        <path d="M527.500 392.500h6v10M527.500 446v-8h6" fill="none" stroke="#1840d8"/>
                                        <path d="M489.500 390.500h37v57h-37zM493.500 394.500h29v49h-29z" fill="none" stroke="#c09060"/>
                                        <path d="M485 415h33v4h-33zM498 422h16v5h-16z" fill="#fff"/>
                                        <circle cx="528" cy="397" r="2.500" fill="#ffec20"/><circle cx="528" cy="440" r="2.500" fill="#ffec20"/>
                                        <!-- stairs -->
                                        <path d="M435 419h5v53h-5zM440 467h10v5h-10zM440 425h14v8h-14zM450 433h4v8h-4z" fill="url(#dots)"/>
                                        <path d="M439 435h11v6h-11z" fill="#5fbf96"/><path d="M440 441h10v26h-10z" fill="#888f94"/><path d="M440 443h10M440 446h10M440 449h10M443 441v13M446 441v13" stroke="#1f2830"/>
                                        <path d="M432 453h22v5h-22zM441 459h8v5h-8z" fill="#fff"/><path d="M439.500 463.500h11" stroke="#5fbf96"/>
                                        <path d="M434 445h5v9h-5z" fill="#d01018"/>
                                        <path d="M446 419l4 6M450 419h4v6M458 419v10M466 452l6 6" fill="none" stroke="#b07050"/>
                                        <path d="M440 420h6v4h-6zM448 421h8v3h-8z" fill="#d8d0cc"/>
                                        <!-- bay window -->
                                        <path d="M453 472h4v11h3v6h-7zM482 479h7v10h-7zM512 472h4v10h2v7h-6zM464 474h16v5h-16z" fill="#fff"/>
                                        <path d="M460 484.500h52M460 488.500h52" stroke="#7a584c"/>
                                        <use href="#mark" x="464" y="219"/><use href="#mark" x="494" y="219"/><use href="#mark" x="524" y="219"/>
                                        <use href="#mark" x="510" y="255"/><use href="#mark" x="525" y="274"/><use href="#mark" x="498" y="293"/>
                                        <use href="#mark" x="472" y="300"/><use href="#mark" x="484" y="316"/><use href="#mark" x="543" y="298"/>
                                        <use href="#mark" x="543" y="344"/><use href="#mark" x="543" y="384"/><use href="#mark" x="494" y="426"/>
                                        <use href="#mark" x="543" y="450"/><use href="#mark" x="465" y="434"/><use href="#mark" x="470" y="447"/>
                                        <use href="#mark" x="456" y="450"/><use href="#mark" x="429" y="450"/><use href="#mark" x="465" y="473"/>
                                        <use href="#mark" x="497" y="478"/><use href="#mark" x="524" y="478"/>
                                        <use href="#plant" x="480" y="371"/><use href="#plant" x="528" y="371"/>
                                        <use href="#plant" x="480" y="461"/><use href="#plant" x="528" y="461"/>
                                    </g>
                                </defs>
                                <!-- axes above the plan -->
                                <path d="M464 161.500h113M514.500 166v58M508.500 162v5h12v-5" fill="none" stroke="#fff"/>
                                <path d="M516.500 166v58M534.500 163v62M542.500 163v62M535 225.500h8" fill="none" stroke="#d01018"/>
                                <path d="M543.500 225v170h-8" fill="none" stroke="#d01018" stroke-dasharray="7 2"/>
                                <path d="M531 161h7v3h-7zM540 161h7v3h-7z" fill="#e86070"/>
                                <path d="M464 173.500h79M464 184.500h79M516.500 174v25M534.500 174v25" fill="none" stroke="#c018c8"/>
                                <path d="M482 181h8v3h-8zM521 181h8v3h-8zM535 181h7v3h-7z" fill="#ff18ff"/>
                                <use href="#wing"/>
                                <use href="#wing" transform="translate(838 0) scale(-1 1)"/>
                                <!-- axes on the left -->
                                <path d="M225 433.500h143M225 469.500h77M225 484.500h15M272 484.500h90" stroke="#d01018"/>
                                <path d="M229.500 419v65M240.500 419v65M230 484.500h42M390.500 438v66M378 503.500h12M523 410.500h36v-10" fill="none" stroke="#a818c0"/>
                                <path d="M237 447h4v8h-4zM237 473h4v8h-4zM384 501h6v3h-6z" fill="#d818e8"/>
                                <g fill="#1f2830" stroke="#d01828"><circle cx="220" cy="433" r="4"/><circle cx="220" cy="469" r="4"/><circle cx="220" cy="484" r="4"/></g>
                                <path d="M217 431h6v4h-6zM217 467h6v4h-6zM217 482h6v4h-6z" fill="#fff"/>
                                <path d="M337.500 478v13M367.500 478v13" stroke="#fff"/><path d="M335 489h4v3h-4zM365 489h4v3h-4z" fill="#fff"/>
                                <!-- north sign -->
                                <path d="M559 384l11 12h-2v4h-18v-4h-2z" fill="#fff"/><path d="M555 393h3v3h-3zM560 390h1v3h-1zM561 393h3v3h-3zM552 398h4v1h-4z" fill="#1f2830"/>
                                <text class="plan-title" x="302" y="519">GROUND&#160; FLOOR PLAN</text>
                                <path d="M302 521h229v4H302zM302 526h30v4h-30z" fill="#fff"/>
                                <!-- ucs -->
                                <path d="M90.500 513.500h9v10h-9zM94.500 513v-50M90 474l4.500-12 4.500 12M100 518.500h51M140 514l11 4.500-11 4.500M90 443l4.500 5 4.500-5M94.500 448v6M161 513l8 11M169 513l-8 11" fill="none" stroke="#fff"/>
                            </svg>
                            <div class="mdi-btns">
                                <button aria-label="Minimalizuj rysunek"><svg viewBox="0 0 12 12"><path d="M1 8h10v3H1z" fill="#d8dcdf"/></svg></button>
                                <button aria-label="Przywróć rysunek"><svg viewBox="0 0 12 12"><path d="M3.500 3V1.500h7v7H9" fill="none" stroke="#d8dcdf"/><path d="M2 4h6v6H2z" fill="none" stroke="#d8dcdf" stroke-width="2"/></svg></button>
                                <button aria-label="Zamknij rysunek"><svg viewBox="0 0 12 12"><path d="M2 2l8 8M10 2l-8 8" stroke="#d8dcdf" stroke-width="2"/></svg></button>
                            </div>
                        </div>

                        <div class="layout-tabs">
                            <button aria-label="Pierwszy"><svg viewBox="0 0 12 12"><path d="M2.500 2v8" stroke="#9aa3ab"/><path d="M9 2v8L4 6z" fill="#9aa3ab"/></svg></button>
                            <button aria-label="Wstecz"><svg viewBox="0 0 12 12"><path d="M8 2v8L3 6z" fill="#9aa3ab"/></svg></button>
                            <button aria-label="Dalej"><svg viewBox="0 0 12 12"><path d="M4 2v8l5-4z" fill="#9aa3ab"/></svg></button>
                            <button aria-label="Ostatni"><svg viewBox="0 0 12 12"><path d="M9.500 2v8" stroke="#9aa3ab"/><path d="M3 2v8l5-4z" fill="#9aa3ab"/></svg></button>
                            <button class="layout on">Model</button>
                            <button class="layout">Layout1</button>
                            <button class="layout">Layout2</button>
                        </div>
                    </section>
                </div>

                <section class="command">
                    <button class="cmd-close" aria-label="Zamknij"><svg viewBox="0 0 12 12"><path d="M2 2l8 8M10 2l-8 8" stroke="#6d757d" stroke-width="2"/></svg></button>
                    <div class="cmd-body">
                        <div class="cmd-log">
                            <div class="cmd-lines">
                                <p>Polecenie:</p>
                                <p>Polecenie:</p>
                            </div>
                            <div class="scroll">
                                <button aria-label="W górę"><svg viewBox="0 0 12 12"><path d="M3 8l3-3 3 3"/></svg></button>
                                <i class="thumb"></i>
                                <button aria-label="W dół"><svg viewBox="0 0 12 12"><path d="M3 4l3 3 3-3"/></svg></button>
                            </div>
                        </div>
                        <input class="cmd-input" type="text" value="Polecenie:" aria-label="Wiersz poleceń">
                    </div>
                </section>
            </div>

            <aside class="props">
                <div class="props-head">
                    <h2>Właściwości</h2>
                    <button aria-label="Zamknij panel"><svg viewBox="0 0 12 12"><path d="M2 2l8 8M10 2l-8 8" stroke="#fff" stroke-width="2"/></svg></button>
                </div>
                <label class="combo pick"><select aria-label="Wybór"><option>Brak wyboru</option></select></label>
                <div class="props-body">
                    <div class="props-list">
                        <h3>Ogólne<i class="tri"></i></h3>
                        <table>
                            <tr><th>Kolor</th><td><i class="swatch"></i>JakWarstwa</td></tr>
                            <tr><th>Warstwa</th><td>0</td></tr>
                            <tr><th>Rodzaj linii</th><td><i class="stroke"></i>JakWarstwa</td></tr>
                            <tr><th>Skala typu linii</th><td>1</td></tr>
                            <tr><th>Szerokość linii</th><td><i class="stroke small"></i>JakWarstwa</td></tr>
                            <tr><th>Grubość</th><td>0</td></tr>
                        </table>
                        <h3>Widok<i class="tri"></i></h3>
                        <table class="muted">
                            <tr><th>Środek X</th><td>14850.7945</td></tr>
                            <tr><th>Środek Y</th><td>15482.1323</td></tr>
                            <tr><th>Środek Z</th><td>0</td></tr>
                            <tr><th>Wysokość</th><td>30785.7026</td></tr>
                        </table>
                    </div>
                    <div class="scroll tall">
                        <button aria-label="W górę"><svg viewBox="0 0 12 12"><path d="M3 8l3-3 3 3"/></svg></button>
                        <i class="thumb"></i>
                        <button aria-label="W dół"><svg viewBox="0 0 12 12"><path d="M3 4l3 3 3-3"/></svg></button>
                    </div>
                </div>
            </aside>
        </div>

        <footer class="status">
            <div class="coords">24866.4097, 30464.5075, 0.0000</div>
            <div class="modes">
                <button aria-label="Siatka"><svg class="ico"><use href="#grid"/></svg></button>
                <button aria-label="Skok"><svg class="ico"><use href="#snap"/></svg></button>
                <button aria-label="Orto"><svg class="ico"><use href="#ortho"/></svg></button>
                <button class="on" aria-label="Biegun"><svg class="ico"><use href="#polar"/></svg></button>
                <button class="on" aria-label="Obiekt"><svg class="ico"><use href="#osnap"/></svg></button>
                <button class="on" aria-label="Śledzenie"><svg class="ico"><use href="#otrack"/></svg></button>
                <button class="on" aria-label="Dynamiczny LUW"><svg class="ico"><use href="#ducs"/></svg></button>
                <button class="on" aria-label="Dyn"><svg class="ico"><use href="#dyn"/></svg></button>
                <button aria-label="Szerokość"><svg class="ico"><use href="#lwt"/></svg></button>
                <button class="on" aria-label="Wybór cykliczny"><svg class="ico"><use href="#cycle"/></svg></button>
                <button class="on" aria-label="Model"><svg class="ico"><use href="#model"/></svg></button>
            </div>
            <div class="status-right">
                <button aria-label="Ustawienia"><svg class="ico"><use href="#gear"/></svg></button>
                <button aria-label="Pełny ekran"><svg class="ico"><use href="#full"/></svg></button>
                <svg class="resize"><use href="#grip"/></svg>
            </div>
        </footer>
    </div>
</body>
</html>
```
FILE: styles.css
```css
*{
    padding: 0;
    margin: 0;
    box-sizing: border-box;
}
body{
    font-family: Roboto, "Noto Sans", sans-serif;
    font-size: 12px;
    color: #f0f3f6;
}
button, select, input{
    font: inherit;
    color: inherit;
    background: none;
    border: none;
    border-radius: 0;
    outline: none;
}
button{
    display: flex;
    align-items: center;
    justify-content: center;
    flex-shrink: 0;
}
i{
    display: block;
    flex-shrink: 0;
}
svg{
    display: block;
    flex-shrink: 0;
}
.sprite{
    position: absolute;
    width: 0;
    height: 0;
}
.ico{
    width: 16px;
    height: 16px;
    fill: none;
    stroke: #e6ebf0;
}
.window{
    display: flex;
    flex-direction: column;
    height: 100vh;
    overflow: hidden;
    border: 1px solid #1d74bd;
    background-color: #31373f;
}

/* title bar */
.titlebar{
    display: flex;
    align-items: center;
    height: 30px;
    padding-left: 8px;
    background-color: #fff;
    color: #000;
}
.titlebar .logo{
    width: 16px;
    height: 16px;
}
.titlebar h1{
    flex: 1;
    margin-left: 6px;
    font-size: 12px;
    font-weight: normal;
    white-space: nowrap;
}
.win-btns{
    display: flex;
}
.win-btns button{
    width: 46px;
    height: 30px;
}
.win-btns svg{
    width: 12px;
    height: 12px;
    fill: none;
    stroke: #000;
}

/* menu */
.menubar{
    display: flex;
    gap: 4px;
    height: 20px;
    border-bottom: 1px solid #c9ced2;
    background-color: #2d373f;
}
.menubar > button, .menu-wrap > button{
    height: 19px;
    padding: 0 9px;
    white-space: nowrap;
}
.menubar .on{
    background-color: #363f48;
}
.menubar .wide{
    margin: 0 8px;
}
.menu-wrap{
    position: relative;
}
.dropdown{
    position: absolute;
    z-index: 10;
    top: 19px;
    left: -1px;
    width: 255px;
    padding: 2px 0;
    border: 1px solid #9fa5aa;
    background: linear-gradient(to right, #363d46 28px, #2d343b 28px, #2d343b 29px, #3a4149 29px);
    box-shadow: 2px 2px 2px rgba(0, 0, 0, .4);
}
.dropdown button{
    width: 100%;
    height: 23px;
    padding-left: 8px;
    justify-content: flex-start;
    gap: 9px;
}
.dropdown button:disabled span{
    color: #5d646c;
}
.dropdown hr{
    height: 1px;
    margin: 2px 6px 3px 30px;
    border: none;
    background-color: #4c545d;
}

/* toolbars */
.toolbars{
    padding-bottom: 3px;
    background-color: #2f3640;
}
.toolbar{
    display: flex;
    align-items: center;
    height: 27px;
    padding-bottom: 2px;
    overflow: hidden;
    background-color: #434b56;
}
.toolbar.short{
    width: 709px;
}
.toolbar button{
    width: 24px;
    height: 24px;
}
.tb-left, .tb-layers{
    display: flex;
    align-items: center;
    flex-shrink: 0;
}
.tb-left{
    width: 453px;
}
.tb-layers{
    width: 397px;
}
.handle{
    width: 4px;
    height: 24px;
    margin: 0 1px 0 4px;
    border: 1px solid #59626c;
    border-width: 0 1px;
}
.sep{
    width: 1px;
    height: 20px;
    margin: 0 4px 0 5px;
    background-color: #2f363f;
}
.swatch{
    width: 12px;
    height: 12px;
    border: 1px solid #000;
    background-color: #fff;
}
.combo{
    position: relative;
    display: flex;
    align-items: center;
    flex-shrink: 0;
    width: 99px;
    height: 24px;
    border-bottom: 1px solid #6a737c;
    font-size: 11px;
}
.combo::after, .tri{
    content: "";
    width: 0;
    height: 0;
    border: 5px solid transparent;
    border-top-color: #fff;
    border-bottom: none;
}
.combo::after{
    position: absolute;
    right: 4px;
    top: 9px;
    pointer-events: none;
}
.combo select{
    flex: 1;
    min-width: 0;
    height: 22px;
    padding-left: 2px;
    appearance: none;
}
.combo.layer{
    flex: 1;
    margin-right: 8px;
    padding-left: 2px;
    gap: 2px;
    font-size: 12px;
}
.combo.color{
    width: 196px;
}
.combo.color select{
    padding-left: 4px;
}
.combo.ltype{
    width: 198px;
    padding-left: 5px;
}
.combo.ltype select{
    padding-left: 5px;
}
.stroke{
    width: 86px;
    height: 1px;
    background-color: #fff;
}

/* work area */
.work{
    display: flex;
    flex: 1;
    min-height: 0;
}
.left{
    display: flex;
    flex-direction: column;
    flex: 1;
    min-width: 0;
    margin-right: 2px;
}
.main{
    display: flex;
    flex: 1;
    min-height: 0;
}
.tools{
    display: flex;
    align-items: flex-start;
    overflow: hidden;
}
.tools-col{
    width: 28px;
    flex-shrink: 0;
    background-color: #434b56;
}
.tools-col button{
    width: 28px;
    height: 23px;
}
.handle-h{
    height: 4px;
    margin: 2px 1px 1px;
    border: 1px solid #59626c;
    border-width: 1px 0;
}
.docs{
    display: flex;
    flex-direction: column;
    flex: 1;
    min-width: 0;
    margin-left: 3px;
}
.doc-tabs{
    display: flex;
    height: 26px;
    background-color: #2c3138;
}
.tab-block{
    width: 19px;
    background-color: #505c65;
}
.tab-list{
    width: 9px;
    margin-left: 1px;
    background-color: #505c65;
}
.doc-tab{
    width: 340px;
    gap: 2px;
    padding-left: 7px;
    justify-content: flex-start;
    background-color: #343b43;
    font-family: "DejaVu Sans Mono", monospace;
    font-size: 13px;
    color: #8d959c;
}
.dwg{
    width: 16px;
    height: 16px;
}
.tab-close{
    padding: 7px 4px;
    font-weight: bold;
    color: #9aa2a9;
    background-color: #3f464f;
    border-radius: 0 10px 0 0;
}
.tab-new{
    width: 36px;
    background-color: #343b43;
    border-radius: 0 12px 0 0;
}
.tab-nav{
    display: flex;
    gap: 1px;
    margin-left: auto;
}
.tab-nav button{
    width: 14px;
    background-color: #4a535c;
}
.tab-nav svg{
    width: 14px;
    height: 26px;
}
.canvas{
    position: relative;
    flex: 1;
    min-height: 0;
    overflow: hidden;
    background-color: #1f2830;
}
.plan-title{
    font: bold 10px "Liberation Sans", sans-serif;
    fill: #fff;
    stroke: #fff;
}
.mdi-btns{
    position: absolute;
    top: 3px;
    right: 5px;
    display: flex;
    gap: 8px;
}
.mdi-btns svg{
    width: 12px;
    height: 12px;
}
.layout-tabs{
    display: flex;
    height: 11px;
    overflow: hidden;
    background-color: #434b56;
    font-family: "DejaVu Sans Mono", monospace;
}
.layout-tabs button{
    width: 16px;
    height: 15px;
    background-color: #31373f;
}
.layout-tabs svg{
    width: 12px;
    height: 12px;
}
.layout-tabs .layout{
    width: 64px;
}
.layout-tabs .on{
    font-weight: bold;
    width: 48px;
}

/* command line */
.command{
    display: flex;
    height: 66px;
    padding-top: 3px;
    background-color: #434b56;
}
.cmd-close{
    width: 24px;
    height: 18px;
}
.cmd-close svg{
    width: 12px;
    height: 12px;
}
.cmd-body{
    display: flex;
    flex-direction: column;
    flex: 1;
    border: 1px solid #555c63;
    background-color: #2b2f33;
    font-family: "DejaVu Sans Mono", monospace;
}
.cmd-log{
    display: flex;
    height: 39px;
    padding-top: 1px;
    border-bottom: 1px solid #6b7177;
}
.cmd-lines{
    flex: 1;
}
.cmd-lines p{
    line-height: 19px;
}
.cmd-input{
    flex: 1;
    width: 100%;
}
.scroll{
    display: flex;
    flex-direction: column;
    width: 15px;
    background-color: #3c4147;
}
.scroll button{
    width: 15px;
    height: 14px;
}
.scroll svg{
    width: 12px;
    height: 12px;
    fill: none;
    stroke: #9aa0a6;
}
.scroll .thumb{
    flex: 1;
    background-color: #545d66;
}

/* properties */
.props{
    display: flex;
    flex-direction: column;
    width: 250px;
    padding: 1px 2px 46px;
    background-color: #434c57;
}
.props-head{
    display: flex;
    align-items: center;
    justify-content: space-between;
    height: 24px;
    padding: 0 8px 0 10px;
    background-color: #505b65;
}
.props-head svg{
    width: 12px;
    height: 12px;
}
.props h2{
    font-size: 14px;
}
.combo.pick{
    width: 158px;
    height: 32px;
    margin-left: 8px;
    font-size: 14px;
    font-weight: bold;
    border-color: #565f69;
}
.combo.pick::after{
    top: 17px;
}
.combo.pick select{
    padding-top: 6px;
    height: 30px;
}
.props-body{
    display: flex;
    flex: 1;
    min-height: 0;
    margin: 0 8px 0 10px;
}
.props-list{
    flex: 1;
    min-width: 0;
    overflow: hidden;
}
.props h3{
    display: flex;
    align-items: flex-end;
    justify-content: space-between;
    height: 55px;
    padding: 0 9px 1px 2px;
    border-bottom: 1px solid #fff;
    font-size: 12px;
    line-height: 16px;
}
.props h3 .tri{
    margin-bottom: 9px;
}
.props table{
    width: 100%;
    table-layout: fixed;
    border-collapse: collapse;
}
.props tr{
    height: 27px;
    border-bottom: 1px solid #565f69;
}
.props th{
    width: 106px;
    padding-left: 2px;
    text-align: left;
    font-weight: normal;
    color: #8f979f;
}
.props td{
    white-space: nowrap;
    color: #dfe4e8;
}
.props .muted td{
    color: #9ba3ab;
}
.props td i{
    display: inline-block;
    vertical-align: middle;
    margin-right: 4px;
}
.props td .swatch{
    margin-left: 4px;
}
.props td .stroke{
    width: 45px;
}
.props td .small{
    width: 16px;
}
.scroll.tall .thumb{
    flex: none;
    height: 60%;
}
.scroll.tall button{
    height: 16px;
    background-color: #3c4147;
}
.scroll.tall button:last-child{
    margin-top: auto;
}

/* status bar */
.status{
    display: flex;
    align-items: center;
    height: 26px;
    background-color: #31373f;
}
.coords{
    width: 328px;
    padding-left: 11px;
    font-size: 14px;
    font-weight: bold;
    color: #fff;
}
.modes{
    display: flex;
    gap: 4px;
}
.modes button{
    width: 20px;
    height: 20px;
    border: 1px solid transparent;
}
.modes .on{
    border-color: #5f9fd0;
    background-color: #4a6078;
}
.status-right{
    display: flex;
    align-items: center;
    gap: 6px;
    margin-left: auto;
}
.resize{
    align-self: flex-end;
    width: 8px;
    height: 8px;
    margin: 0 1px 2px 6px;
}
```
